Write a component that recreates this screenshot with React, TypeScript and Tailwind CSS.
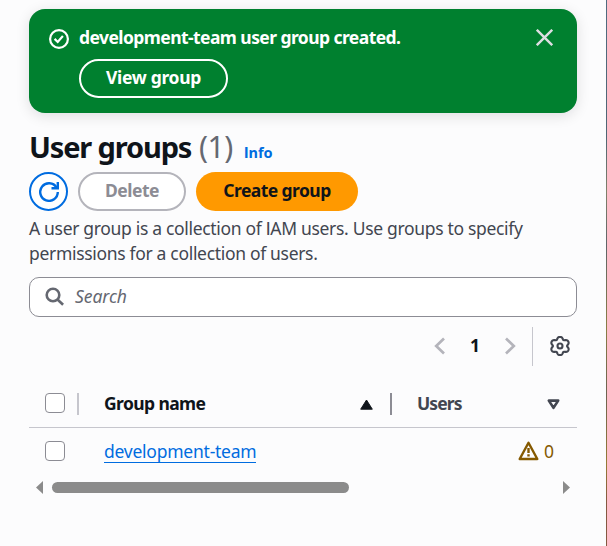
import React from "react";

const noto = "font-['Noto_Sans',sans-serif]";

// Outline of a six-lobed cog centred in a 20-unit box: broad lobes, narrow notches.
const cog =
  Array.from({ length: 120 }, (_, i) => {
    const a = (i * 3 * Math.PI) / 180;
    const notch = Math.pow((1 - Math.cos(6 * (a - Math.PI / 2))) / 2, 1.6);
    const r = 9.1 - 2.3 * notch;
    return `${i ? "L" : "M"}${(10 + 1.04 * r * Math.cos(a)).toFixed(2)} ${(10 - r * Math.sin(a)).toFixed(2)}`;
  }).join("") + "Z";

function Refresh() {
  return (
    <svg width="20" height="20" viewBox="0 0 20 20" fill="none" stroke="currentColor" strokeWidth="2.4">
      <path d="M18.8 10a8.8 8.8 0 1 1-1.3-4.6" />
      <path d="M12.5 6.3h6.3V0" />
    </svg>
  );
}

function Gear() {
  return (
    <svg width="20" height="20" viewBox="0 0 20 20" fill="none" stroke="currentColor" strokeWidth="2.1" strokeLinejoin="round">
      <path d={cog} />
      <circle cx="10" cy="10" r="2.5" />
    </svg>
  );
}

function Checkbox() {
  return <span className="block size-5 shrink-0 rounded-[4px] border border-[#8c8c94] bg-white" />;
}

function Banner() {
  return (
    <section className="flex h-[104px] items-start rounded-2xl bg-[#00802f] pl-5 pr-6 text-white shadow-[0_3px_14px_rgba(0,7,22,0.12)]">
      <svg className="mt-5 shrink-0" width="20" height="20" viewBox="0 0 20 20" fill="none" stroke="currentColor" strokeWidth="2.2">
        <circle cx="10" cy="10" r="8.9" />
        <path d="M5.6 9.9l3.1 3.1 5.2-6" />
      </svg>
      <div className="ml-[10px] flex-1 pt-4">
        <p className="h-[26px] whitespace-nowrap text-[17.5px] font-bold leading-6 tracking-[-0.57px]">development-team user group created.</p>
        <button className="mt-2 flex h-[39px] w-[149px] items-center justify-center rounded-full border-2 border-white pb-[3px] text-[17.5px] font-bold tracking-[-0.3px]">View group</button>
      </div>
      <svg className="mt-5 text-[#dedee3]" width="17" height="17" viewBox="0 0 17 17" stroke="currentColor" strokeWidth="2.4">
        <path d="M.8.8l15.4 15.4M16.2.8L.8 16.2" />
      </svg>
    </section>
  );
}

export default function App() {
  return (
    <div className={`${noto} flex h-[546px] w-[607px] overflow-hidden bg-[#fcfcfd] text-[17.5px] text-[#424650]`}>
      <main className="ml-[29px] w-[548px] shrink-0 pt-[9px]">
        <Banner />

        <div className="mt-[18px] flex h-8 items-baseline whitespace-nowrap leading-8">
          <h1 className="w-[163px] text-[29px] font-bold tracking-[-1.15px] text-[#0f141a]">User groups</h1>
          <span className="ml-[7px] w-[35px] text-[30px] tracking-[-0.5px] text-[#656871]">(1)</span>
          <a className="ml-[10px] text-[14.5px] font-bold text-[#006ce0]"><span className="font-['Lato',sans-serif] text-[15px] font-black">I</span>nfo</a>
        </div>

        <div className="mt-[9px] flex h-[39px] gap-[10px] font-bold">
          <button className="flex size-[39px] items-center justify-center rounded-full border-2 border-[#006ce0] bg-white text-[#006ce0]"><Refresh /></button>
          <button className="w-[108px] rounded-full border-2 border-[#b4b4bb] bg-white pb-[2px] tracking-[-0.5px] text-[#8c8c94]">Delete</button>
          <button className="w-[162px] rounded-full bg-[#ff9900] pb-[2px] tracking-[-0.57px] text-[#0f141a]">Create group</button>
        </div>

        <p className="mt-[5px] h-[50px] whitespace-nowrap leading-[25px] tracking-[-0.32px]">
          A user group is a collection of <span className="font-['Lato',sans-serif]">I</span>AM users. Use groups to specify
          <br />
          permissions for a collection of users.
        </p>

        <div className="mt-[11px] flex h-10 items-center rounded-[10px] border border-[#8c8c94] bg-white pl-[15px]">
          <svg width="20" height="20" viewBox="0 0 20 20" fill="none" stroke="#656871" strokeWidth="2.6">
            <circle cx="8" cy="8" r="6.3" />
            <path d="M12.5 12.5l5.6 5.3" />
          </svg>
          <span className="ml-[10px] pb-px italic tracking-[-0.05px] text-[#656871]">Search</span>
        </div>

        <div className="mt-[9px] flex h-10 items-center">
          <svg className="ml-[405px] text-[#b4b4bb]" width="11" height="18" viewBox="0 0 11 18" fill="none" stroke="currentColor" strokeWidth="2.7"><path d="M10 1.5L2.2 9l7.8 7.5" /></svg>
          <span className="ml-[22px] w-4 pb-px text-center font-bold text-[#0f141a]">1</span>
          <svg className="ml-[22px] text-[#b4b4bb]" width="11" height="18" viewBox="0 0 11 18" fill="none" stroke="currentColor" strokeWidth="2.7"><path d="M1 1.5L8.8 9 1 16.5" /></svg>
          <span className="ml-4 h-[39px] w-px bg-[#c6c6cd]" />
          <span className="ml-[17px]"><Gear /></span>
        </div>

        <div className="mt-[14px] flex h-12 items-center border-b border-[#c6c6cd] pl-4 font-bold">
          <span className="pb-[2px]"><Checkbox /></span>
          <span className="ml-3 h-[22px] w-[2px] bg-[#c6c6cd]" />
          <span className="ml-[25px] w-[256px] tracking-[-0.6px] text-[#0f141a]">Group name</span>
          <svg className="mt-px" width="13" height="11" viewBox="0 0 13 11" fill="#0f141a" stroke="#0f141a" strokeLinejoin="round"><path d="M6.5 1L12.3 10.2H.7z" /></svg>
          <span className="ml-[17px] h-[22px] w-[2px] bg-[#8c8c94]" />
          <span className="ml-[25px] w-[130px] tracking-[-0.9px]">Users</span>
          <svg className="mt-[2px]" width="13" height="11" viewBox="0 0 13 11" fill="none" stroke="currentColor" strokeWidth="2.6" strokeLinejoin="round"><path d="M1.8 1.6h9.4L6.5 8.8z" /></svg>
        </div>

        <div className="flex h-[46px] items-center pl-4">
          <Checkbox />
          <a className="ml-[39px] mt-px h-[23px] w-[152px] whitespace-nowrap border-b border-[#006ce0] leading-[22px] tracking-[-0.24px] text-[#006ce0]">development-team</a>
          <svg className="ml-[262px] text-[#855900]" width="21" height="20" viewBox="0 0 21 20" fill="none" stroke="currentColor" strokeWidth="2.4" strokeLinejoin="round">
            <path d="M10.5 1.8L19.3 18H1.7z" />
            <path d="M10.5 7v5M10.5 13.2v2.2" />
          </svg>
          <span className="ml-[5px] text-[#855900]">0</span>
        </div>

        <div className="mt-[7px] flex h-[13px] items-center pl-[7px]">
          <svg width="7" height="13" viewBox="0 0 7 13" fill="#8b8b8b"><path d="M7 0v13L0 6.5z" /></svg>
          <span className="ml-[9px] h-[11px] w-[297px] rounded-full bg-[#8b8b8b]" />
          <svg className="ml-[214px]" width="7" height="13" viewBox="0 0 7 13" fill="#8b8b8b"><path d="M0 0v13l7-6.5z" /></svg>
        </div>
      </main>
      <div className="ml-auto w-px bg-[linear-gradient(#4f6b80,#4f6574_25%,#80806a_35%,#5f6468_45%,#8a7d45_60%,#6e6250_72%,#967a35_85%,#855840_92%,#855840)]" />
    </div>
  );
}
